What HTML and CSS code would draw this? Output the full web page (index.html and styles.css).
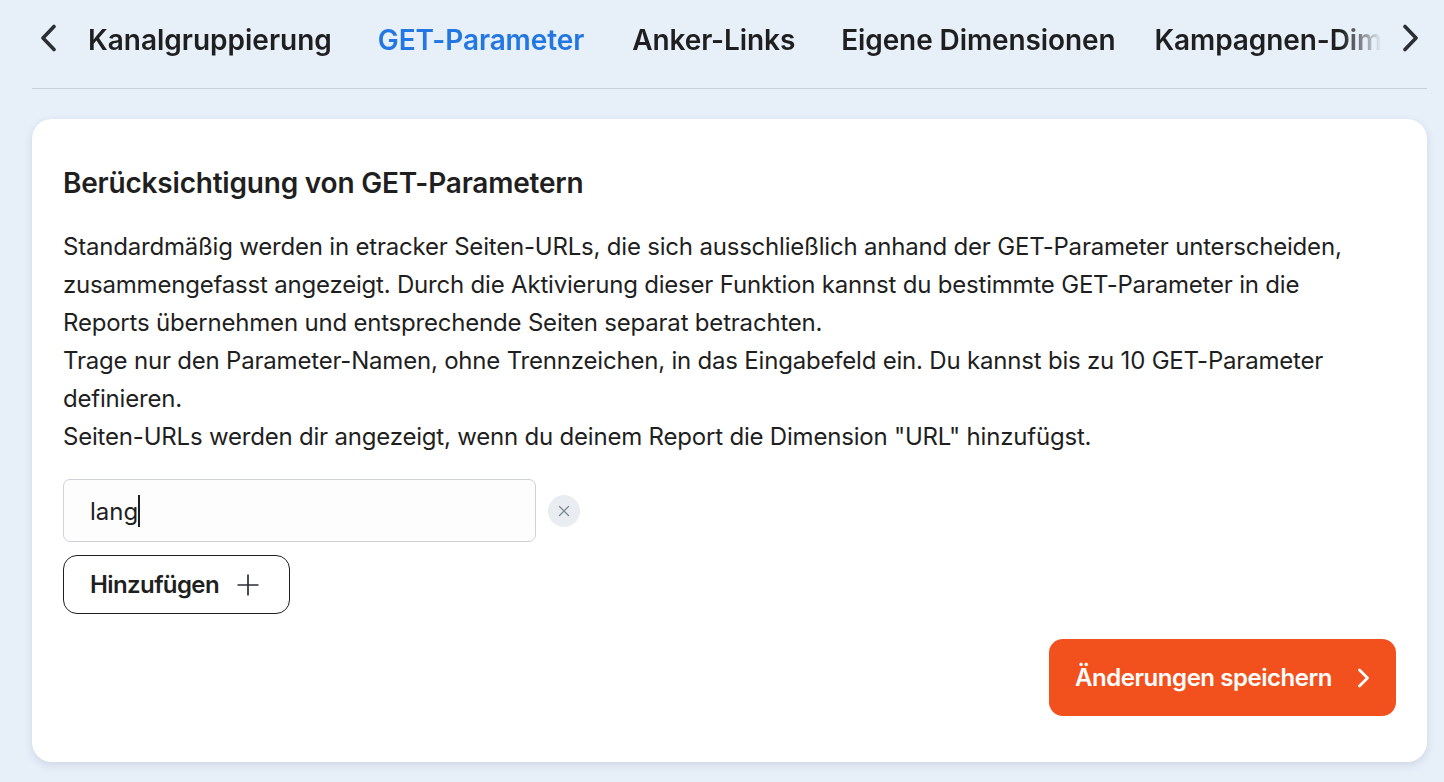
FILE: index.html
```html
<!DOCTYPE html>
<html lang="de">
<head>
    <meta charset="UTF-8">
    <meta name="viewport" content="width=device-width, initial-scale=1.0">
    <link rel="stylesheet" href="styles.css">
    <title>GET-Parameter</title>
</head>
<body>
    <div class="tabbar">
        <button type="button" class="pfeil">
            <svg width="18" height="28" viewBox="0 0 18 28"><path d="M15 2.5 4 14l11 11.5" fill="none" stroke="#2b2e33" stroke-width="3.6" stroke-linecap="round" stroke-linejoin="round"/></svg>
        </button>
        <div class="tabs">
            <a class="tab erster">Kanalgruppierung</a>
            <a class="tab aktiv">GET-Parameter</a>
            <a class="tab">Anker-Links</a>
            <a class="tab eng">Eigene Dimensionen</a>
            <a class="tab">Kampagnen-Dimensionen</a>
        </div>
        <button type="button" class="pfeil">
            <svg width="18" height="28" viewBox="0 0 18 28"><path d="M3 2.5 14 14 3 25.5" fill="none" stroke="#2b2e33" stroke-width="3.6" stroke-linecap="round" stroke-linejoin="round"/></svg>
        </button>
    </div>

    <div class="karte">
        <h2>Berücksichtigung von GET-Parametern</h2>
        <p class="text">
            Standardmäßig werden in etracker Seiten-URLs, die sich ausschließlich anhand der GET-Parameter unterscheiden, zusammengefasst angezeigt. Durch die Aktivierung dieser Funktion kannst du bestimmte GET-Parameter in die<br>
            Reports übernehmen und entsprechende Seiten separat betrachten.<br>
            Trage nur den Parameter-Namen, ohne Trennzeichen, in das Eingabefeld ein. Du kannst bis zu 10 GET-Parameter definieren.<br>
            Seiten-URLs werden dir angezeigt, wenn du deinem Report die Dimension "URL" hinzufügst.
        </p>

        <div class="zeile">
            <div class="eingabe"><span>lang</span><span class="cursor"></span></div>
            <button type="button" class="entfernen">
                <svg width="12" height="12" viewBox="0 0 12 12"><path d="M1.5 1.5l9 9M10.5 1.5l-9 9" fill="none" stroke="#7d8792" stroke-width="1.3" stroke-linecap="round"/></svg>
            </button>
        </div>

        <button type="button" class="hinzufuegen">
            Hinzufügen
            <svg width="24" height="24" viewBox="0 0 24 24"><path d="M12 1.5v21M1.5 12h21" fill="none" stroke="#2b2e33" stroke-width="1.7"/></svg>
        </button>

        <div class="fuss">
            <button type="button" class="speichern">
                Änderungen speichern
                <svg width="14" height="22" viewBox="0 0 14 22"><path d="M2.5 3 10.5 11l-8 8" fill="none" stroke="#fff" stroke-width="2.8" stroke-linecap="round" stroke-linejoin="round"/></svg>
            </button>
        </div>
    </div>
</body>
</html>
```

FILE: styles.css
```css
html, body {
    height: 100%;
}

body {
    margin: 0;
    padding: 0 17px 0 32px;
    box-sizing: border-box;
    overflow: hidden;
    background-color: #E7EFF9;
    color: #1f1f1f;
    font-family: Inter, "Liberation Sans", sans-serif;
}

button {
    font-family: inherit;
    cursor: pointer;
}

.tabbar {
    display: flex;
    align-items: stretch;
    height: 89px;
    box-sizing: border-box;
    border-bottom: 1px solid #c9cfd6;
}

.pfeil {
    flex: none;
    width: 32px;
    padding: 0 0 10px 0;
    border: 0;
    background: none;
}

.tabs {
    flex: 1;
    min-width: 0;
    display: flex;
    overflow: hidden;
    padding-left: 13px;
    -webkit-mask-image: linear-gradient(to right, #000 96%, transparent 99%);
    mask-image: linear-gradient(to right, #000 96%, transparent 99%);
}

.tab {
    flex: none;
    height: 92px;
    box-sizing: border-box;
    padding: 21px 11px 0;
    margin-right: 24px;
    font-size: 28px;
    line-height: 38px;
    font-weight: 600;
    letter-spacing: -0.1px;
    white-space: nowrap;
}

.tab.erster {
    letter-spacing: 0;
}

.tab.aktiv {
    margin-right: 26px;
    color: #2277E3;
    border-bottom: 4px solid #2277E3;
}

.tab.eng {
    margin-right: 17px;
}

.karte {
    margin-top: 30px;
    height: 643px;
    box-sizing: border-box;
    padding: 43px 31px 0;
    background-color: white;
    border-radius: 20px;
    box-shadow: 0 3px 8px rgba(60, 80, 110, 0.15);
}

h2 {
    margin: 0;
    font-size: 28px;
    line-height: 42px;
    font-weight: 600;
    letter-spacing: -0.2px;
}

.text {
    margin: 24px 0 0 0;
    font-size: 24px;
    line-height: 38px;
    letter-spacing: -0.2px;
}

.zeile {
    display: flex;
    align-items: center;
    gap: 12px;
    margin-top: 23px;
}

.eingabe {
    width: 473px;
    height: 63px;
    box-sizing: border-box;
    display: flex;
    align-items: center;
    padding: 1px 0 0 26px;
    border: 1px solid #cfd2d6;
    border-radius: 7px;
    background-color: #fdfdfd;
    font-size: 24px;
}

.cursor {
    width: 2px;
    height: 32px;
    background-color: #1f1f1f;
}

.entfernen {
    width: 32px;
    height: 32px;
    padding: 0;
    border: 0;
    border-radius: 50%;
    background-color: #E9EDF2;
    display: flex;
    align-items: center;
    justify-content: center;
}

.hinzufuegen {
    display: flex;
    align-items: center;
    gap: 17px;
    width: 227px;
    height: 59px;
    margin-top: 13px;
    padding: 0 0 0 26px;
    border: 1px solid #1f1f1f;
    border-radius: 14px;
    background-color: white;
    color: #1f1f1f;
    font-size: 24px;
    font-weight: 600;
    letter-spacing: -0.6px;
}

.fuss {
    display: flex;
    justify-content: flex-end;
    margin-top: 25px;
}

.speichern {
    display: flex;
    align-items: center;
    gap: 25px;
    width: 347px;
    height: 77px;
    padding: 0 0 0 26px;
    border: 0;
    border-radius: 14px;
    background-color: #F2501C;
    color: white;
    font-size: 24px;
    font-weight: 600;
    letter-spacing: -0.45px;
}
```
